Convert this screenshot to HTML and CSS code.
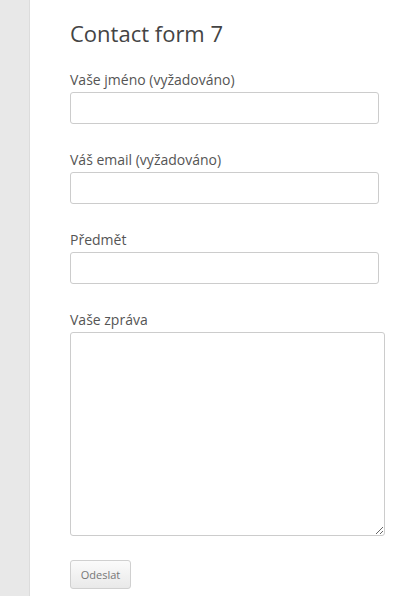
FILE: index.html
```html
<!DOCTYPE html>
<html>
<head>
    <meta charset="utf-8">
    <title>Contact form 7</title>
    <link rel="stylesheet" href="styles.css">
</head>
<body>
    <div class="page">
        <div class="sidebar"></div>
        <div class="content">
            <h1>Contact form 7</h1>
            <form class="contact-form">
                <div class="field">
                    <label for="name">Vaše jméno (vyžadováno)</label>
                    <input type="text" id="name">
                </div>
                <div class="field">
                    <label for="email">Váš email (vyžadováno)</label>
                    <input type="text" id="email">
                </div>
                <div class="field">
                    <label for="subject">Předmět</label>
                    <input type="text" id="subject">
                </div>
                <div class="field">
                    <label for="message">Vaše zpráva</label>
                    <textarea id="message"></textarea>
                </div>
                <button type="button">Odeslat</button>
            </form>
        </div>
    </div>
</body>
</html>
```

FILE: styles.css
```css
body {
    margin: 0;
    font-family: 'Open Sans', 'Noto Sans', sans-serif;
    background-color: #fff;
    color: #555;
}

.page {
    display: flex;
    min-height: 100vh;
}

.sidebar {
    width: 29px;
    background-color: #e8e8e8;
    border-right: 1px solid #dcdcdc;
}

.content {
    padding: 18px 0 0 40px;
}

h1 {
    margin: 0 0 22px;
    font-size: 22px;
    font-weight: normal;
    line-height: 30px;
    color: #444;
}

.field {
    margin-bottom: 26px;
}

label {
    display: block;
    font-size: 14px;
    line-height: 20px;
    margin-bottom: 2px;
}

input[type="text"] {
    display: block;
    box-sizing: border-box;
    width: 309px;
    height: 32px;
    border: 1px solid #ccc;
    border-radius: 3px;
    background-color: #fff;
    padding: 4px 6px;
}

textarea {
    display: block;
    box-sizing: border-box;
    width: 315px;
    height: 204px;
    border: 1px solid #ccc;
    border-radius: 3px;
    margin-bottom: -2px;
}

button {
    width: 61px;
    height: 29px;
    font-family: 'Open Sans', sans-serif;
    font-size: 11px;
    color: #777;
    background: linear-gradient(#fbfbfb, #e9e9e9);
    border: 1px solid #d0d0d0;
    border-radius: 3px;
    padding: 0;
}
```
